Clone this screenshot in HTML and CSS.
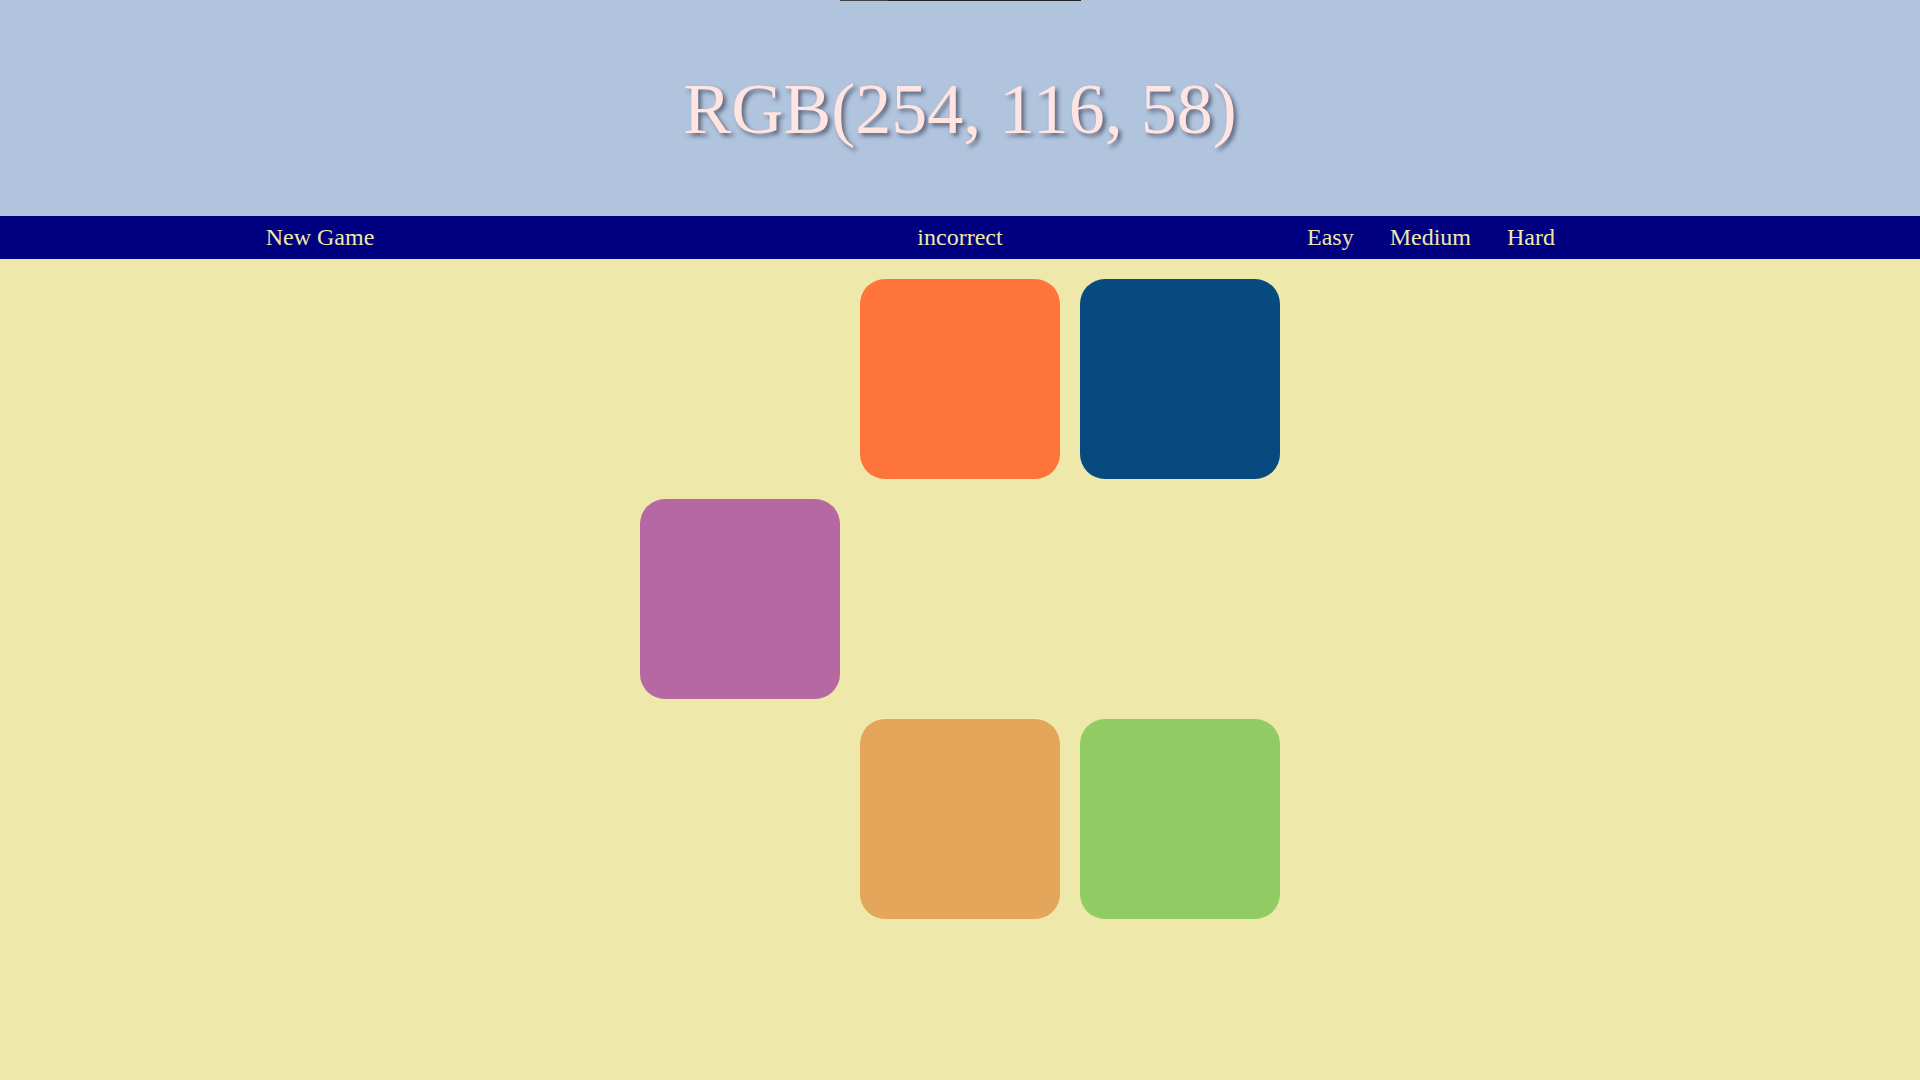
FILE: index.html
```html
<!DOCTYPE html>
<html lang="en">
<head>
<meta charset="utf-8">
<title>RGB Color Game</title>
<link rel="stylesheet" href="styles.css">
</head>
<body>
<header class="header">
  <div class="top-line"></div>
  <h1 class="title">RGB(254, 116, 58)</h1>
</header>
<nav class="stripe">
  <div class="stripe-col stripe-left">
    <button class="btn">New Game</button>
  </div>
  <div class="stripe-col stripe-mid">
    <span class="message">incorrect</span>
  </div>
  <div class="stripe-col stripe-right">
    <button class="btn">Easy</button>
    <button class="btn">Medium</button>
    <button class="btn">Hard</button>
  </div>
</nav>
<main class="board">
  <div class="square hidden"></div>
  <div class="square sq-orange"></div>
  <div class="square sq-blue"></div>
  <div class="square sq-purple"></div>
  <div class="square hidden"></div>
  <div class="square hidden"></div>
  <div class="square hidden"></div>
  <div class="square sq-tan"></div>
  <div class="square sq-green"></div>
</main>
</body>
</html>
```
FILE: styles.css
```css
html, body {
  margin: 0;
  padding: 0;
}
body {
  background: #EEE8AA;
  font-family: "Liberation Serif", "Times New Roman", serif;
  min-height: 1080px;
}
.header {
  background: #B0C4DE;
  height: 216px;
  box-sizing: border-box;
  overflow: hidden;
}
.top-line {
  width: 241px;
  height: 1px;
  margin: 0 auto;
  background: linear-gradient(to right, #444444 0, #444444 48px, #222222 48px, #222222 100%);
}
.title {
  margin: 67px 0 0 0;
  font-size: 72px;
  line-height: 83px;
  font-weight: normal;
  text-align: center;
  color: #FFE4E1;
  text-shadow: 3px 3px 4px rgba(40, 40, 60, 0.6);
}
.stripe {
  background: #000080;
  height: 43px;
  display: grid;
  grid-template-columns: repeat(3, 1fr);
  align-items: center;
}
.stripe-col {
  display: flex;
  align-items: center;
}
.stripe-left,
.stripe-mid {
  justify-content: center;
}
.stripe-right {
  justify-content: flex-start;
  padding-left: 27px;
  gap: 36px;
}
.btn,
.message {
  font-family: "Liberation Serif", "Times New Roman", serif;
  font-size: 24px;
  line-height: 27px;
  color: #EEE8AA;
}
.btn {
  background: none;
  border: 0;
  padding: 0;
  margin: 0;
  cursor: pointer;
}
.board {
  display: grid;
  grid-template-columns: repeat(3, 200px);
  grid-auto-rows: 200px;
  gap: 20px;
  justify-content: center;
  margin-top: 20px;
}
.square {
  border-radius: 25px;
}
.hidden {
  visibility: hidden;
}
.sq-orange { background: #FE743A; }
.sq-blue { background: #074A80; }
.sq-purple { background: #B568A2; }
.sq-tan { background: #E4A65B; }
.sq-green { background: #91CB64; }
```
